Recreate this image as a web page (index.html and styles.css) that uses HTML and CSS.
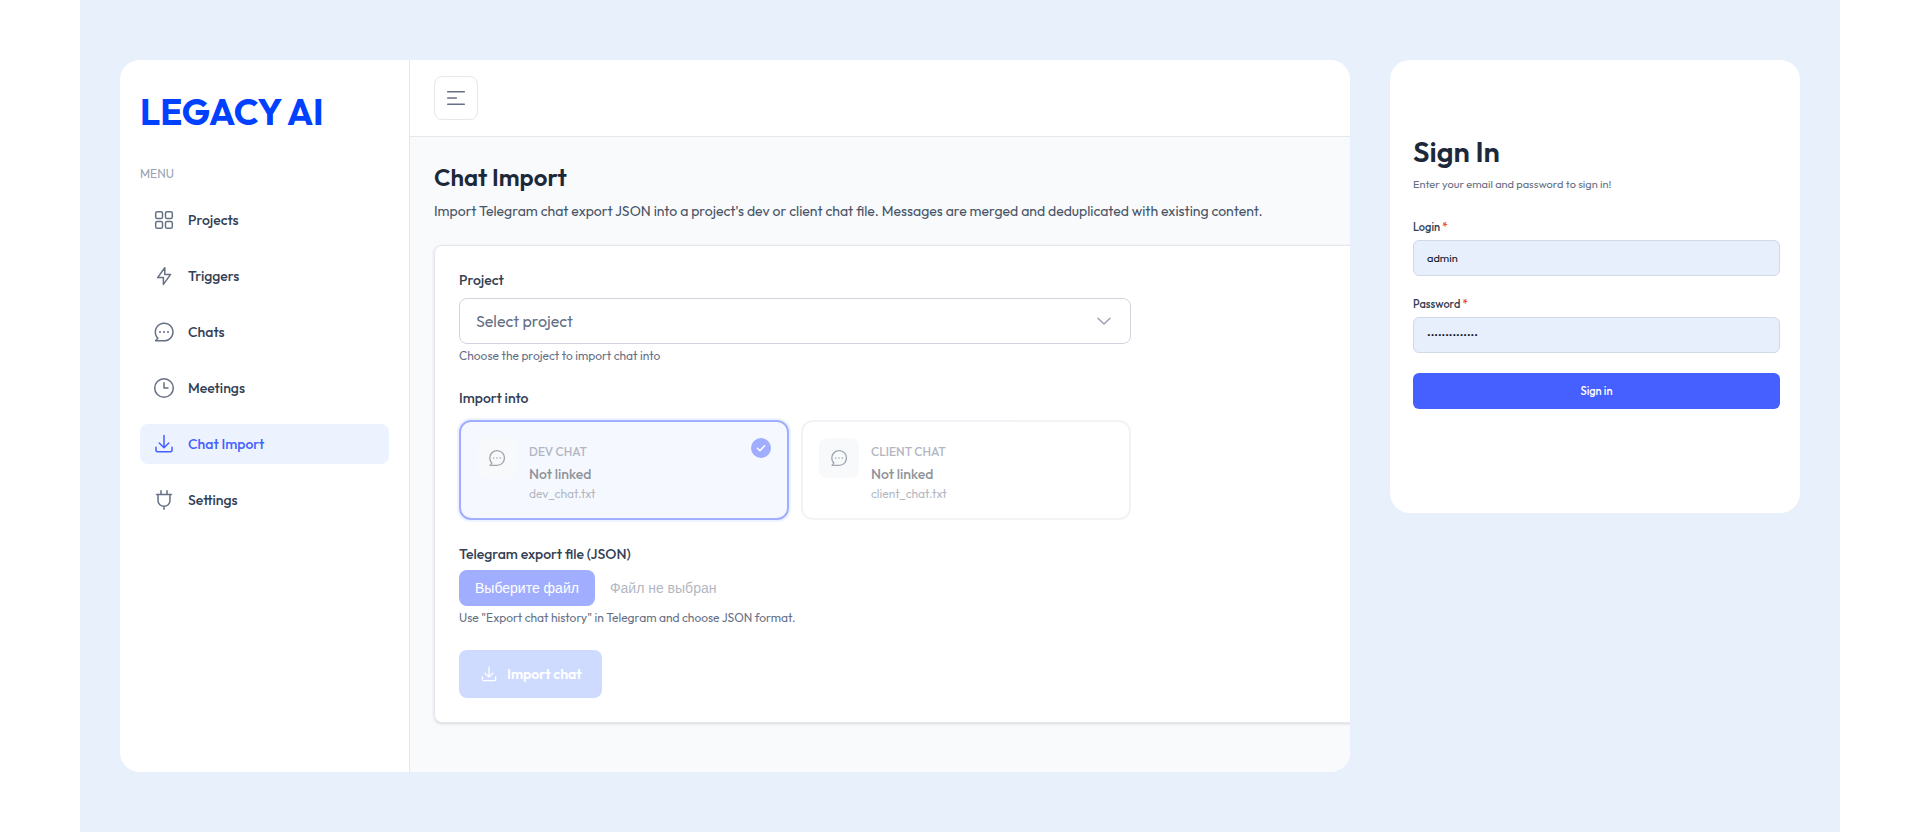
FILE: index.html
```html
<!DOCTYPE html>
<html lang="en">
<head>
    <meta charset="UTF-8">
    <meta name="viewport" content="width=device-width, initial-scale=1.0">
    <title>Legacy AI - Chat Import</title>
    <link rel="stylesheet" href="styles.css">
</head>
<body>
    <!-- Shared icons -->
    <svg class="sprite" aria-hidden="true">
        <symbol id="icon-chat" viewBox="0 0 24 24">
            <path d="M3.6 20.8L5.9 18.2A8.8 8.8 0 1 1 12 20.8Z"/>
            <path d="M8 12h.01M12 12h.01M16 12h.01" stroke-width="2"/>
        </symbol>
        <symbol id="icon-download" viewBox="0 0 24 24">
            <path d="M12 3.5V15.6M7.2 11L12 15.8L16.8 11M4 15.3V18.3A1.5 1.5 0 0 0 5.5 19.8H18.5A1.5 1.5 0 0 0 20 18.3V15.3"/>
        </symbol>
    </svg>

    <div class="stage">
        <div class="app">
            <aside class="sidebar">
                <div class="logo">LEGACY AI</div>
                <h2 class="menu-title">MENU</h2>
                <nav class="menu">
                    <a href="#" class="menu-item">
                        <svg class="icon" viewBox="0 0 24 24"><rect x="3.7" y="3.7" width="6.8" height="6.8" rx="1.6"/><rect x="13.5" y="3.7" width="6.8" height="6.8" rx="1.6"/><rect x="3.7" y="13.5" width="6.8" height="6.8" rx="1.6"/><rect x="13.5" y="13.5" width="6.8" height="6.8" rx="1.6"/></svg>
                        Projects
                    </a>
                    <a href="#" class="menu-item">
                        <svg class="icon" viewBox="0 0 24 24"><path d="M12.8 3.8L5.6 13.6H11.4V20.4L18.6 10.4H12.8Z"/></svg>
                        Triggers
                    </a>
                    <a href="#" class="menu-item">
                        <svg class="icon"><use href="#icon-chat"/></svg>
                        Chats
                    </a>
                    <a href="#" class="menu-item">
                        <svg class="icon" viewBox="0 0 24 24"><circle cx="12" cy="12" r="9.3"/><path d="M12 6.8V12H16"/></svg>
                        Meetings
                    </a>
                    <a href="#" class="menu-item active">
                        <svg class="icon"><use href="#icon-download"/></svg>
                        Chat Import
                    </a>
                    <a href="#" class="menu-item">
                        <svg class="icon" viewBox="0 0 24 24"><path d="M9 2.8V6.3M15 2.8V6.3M4.6 6.4H19.4M6 6.4V12.6C6 16 8.8 18.3 12 18.3S18 16 18 12.6V6.4M12 18.3V21.2"/></svg>
                        Settings
                    </a>
                </nav>
            </aside>

            <div class="main">
                <header class="topbar">
                    <button type="button" class="toggle" aria-label="Toggle sidebar">
                        <svg class="icon" viewBox="0 0 24 24"><path d="M3.7 5.7H20.3M3.7 12H12.4M3.7 18.3H20.3"/></svg>
                    </button>
                </header>

                <main class="content">
                    <h1>Chat Import</h1>
                    <p class="lead">Import Telegram chat export JSON into a project's dev or client chat file. Messages are merged and deduplicated with existing content.</p>

                    <form class="card">
                        <div class="field">
                            <label class="label" for="project">Project</label>
                            <div class="select-wrap">
                                <select id="project">
                                    <option>Select project</option>
                                </select>
                                <svg class="chevron" viewBox="0 0 20 20"><path d="M4 7.2L10 13L16 7.2"/></svg>
                            </div>
                            <p class="hint">Choose the project to import chat into</p>
                        </div>

                        <fieldset class="field">
                            <legend class="label">Import into</legend>
                            <div class="targets">
                                <label class="target selected">
                                    <input type="radio" name="target" checked disabled>
                                    <span class="tile"><svg class="icon"><use href="#icon-chat"/></svg></span>
                                    <span class="target-text">
                                        <span class="target-kind">DEV CHAT</span>
                                        <span class="target-name">Not linked</span>
                                        <span class="target-file">dev_chat.txt</span>
                                    </span>
                                    <span class="badge"><svg viewBox="0 0 20 20"><path d="M6.4 10.3L8.9 12.7L13.6 7.7"/></svg></span>
                                </label>
                                <label class="target">
                                    <input type="radio" name="target" disabled>
                                    <span class="tile"><svg class="icon"><use href="#icon-chat"/></svg></span>
                                    <span class="target-text">
                                        <span class="target-kind">CLIENT CHAT</span>
                                        <span class="target-name">Not linked</span>
                                        <span class="target-file">client_chat.txt</span>
                                    </span>
                                </label>
                            </div>
                        </fieldset>

                        <div class="field">
                            <label class="label file-label" for="export-file">Telegram export file (JSON)</label>
                            <div class="file">
                                <span class="file-button">Выберите файл</span>
                                <span>Файл не выбран</span>
                                <input type="file" id="export-file" accept=".json" disabled>
                            </div>
                            <p class="hint">Use "Export chat history" in Telegram and choose JSON format.</p>
                        </div>

                        <button type="submit" class="import-button" disabled>
                            <svg class="icon"><use href="#icon-download"/></svg>
                            Import chat
                        </button>
                    </form>
                </main>
            </div>
        </div>

        <form class="login">
            <h1>Sign In</h1>
            <p>Enter your email and password to sign in!</p>
            <label for="login">Login <span class="required">*</span></label>
            <input type="text" id="login" value="admin">
            <label for="password">Password <span class="required">*</span></label>
            <input type="password" id="password" value="adminpassword1">
            <button type="submit">Sign in</button>
        </form>
    </div>
</body>
</html>
```
FILE: styles.css
```css
* {
    margin: 0;
    padding: 0;
    box-sizing: border-box;
}

body {
    font-family: Outfit, Lato, sans-serif;
    font-size: 14px;
    line-height: 20px;
    background: #fff;
    color: #344054;
}

button,
input,
select {
    font: inherit;
}

.sprite {
    position: absolute;
    width: 0;
    height: 0;
}

.icon {
    width: 24px;
    height: 24px;
    flex: none;
    fill: none;
    stroke: currentColor;
    stroke-width: 1.5;
    stroke-linecap: round;
    stroke-linejoin: round;
}

.stage {
    display: grid;
    grid-template-columns: 3fr 1fr;
    align-items: start;
    gap: 40px;
    max-width: 1760px;
    min-height: 100vh;
    margin: 0 auto;
    padding: 60px 40px;
    background: #e8f1fb;
}

.app,
.login {
    border-radius: 20px;
    overflow: hidden;
    background: #fff;
}

.app {
    display: flex;
}

/* Sidebar */
.sidebar {
    width: 290px;
    flex: none;
    padding: 32px 20px;
    border-right: 1px solid #e4e7ec;
}

.logo {
    margin-bottom: 32px;
    font-size: 36px;
    line-height: 40px;
    font-weight: 700;
    color: #0040ff;
}

.menu-title {
    margin-bottom: 16px;
    font-size: 12px;
    line-height: 20px;
    font-weight: 400;
    color: #98a2b3;
}

.menu {
    display: flex;
    flex-direction: column;
    gap: 16px;
}

.menu-item {
    display: flex;
    align-items: center;
    gap: 12px;
    padding: 8px 12px;
    border-radius: 8px;
    font-weight: 500;
    color: #344054;
    text-decoration: none;
}

.menu-item .icon {
    color: #667085;
}

.menu-item.active {
    background: #ecf3ff;
}

.menu-item.active,
.menu-item.active .icon {
    color: #465fff;
}

/* Main area */
.main {
    flex: 1;
    min-width: 0;
    background: #f9fafc;
}

.topbar {
    padding: 16px 24px;
    border-bottom: 1px solid #e4e7ec;
    background: #fff;
}

.toggle {
    display: flex;
    align-items: center;
    justify-content: center;
    width: 44px;
    height: 44px;
    border: 1px solid #e4e7ec;
    border-radius: 8px;
    background: #fff;
    color: #667085;
}

.content {
    padding: 24px 0 49px 24px;
}

.content h1 {
    margin-bottom: 8px;
    font-size: 24px;
    line-height: 32px;
    font-weight: 600;
    color: #1d2939;
}

.lead {
    margin-bottom: 24px;
    color: #475467;
}

/* The card runs on past the clipped right edge of the window */
.card {
    margin-right: -24px;
    padding: 24px;
    border: 1px solid #e4e7ec;
    border-radius: 8px;
    background: #fff;
    box-shadow: 0 1px 3px rgba(16, 24, 40, 0.15);
}

.field {
    max-width: 672px;
    margin-bottom: 24px;
    border: none;
}

.label {
    display: block;
    margin-bottom: 8px;
    font-weight: 500;
}

legend.label {
    margin-bottom: 12px;
}

.file-label {
    margin-bottom: 6px;
}

.select-wrap,
.file,
.target {
    position: relative;
}

select {
    display: block;
    width: 100%;
    height: 46px;
    padding: 0 48px 0 16px;
    border: 1px solid #d0d5dd;
    border-radius: 8px;
    appearance: none;
    background: #fff;
    color: #667085;
    font-size: 16px;
}

.chevron {
    position: absolute;
    top: 13px;
    right: 17px;
    width: 20px;
    height: 20px;
    fill: none;
    stroke: #98a2b3;
    stroke-width: 1.5;
    stroke-linecap: round;
    stroke-linejoin: round;
    pointer-events: none;
}

.hint {
    margin-top: 4px;
    font-size: 12px;
    line-height: 16px;
    color: #667085;
}

/* Chat targets */
.targets {
    display: grid;
    grid-template-columns: 1fr 1fr;
    gap: 12px;
}

.target {
    display: flex;
    gap: 12px;
    padding: 16px;
    border: 2px solid #e4e7ec;
    border-radius: 12px;
    opacity: 0.5;
}

.target.selected {
    border-color: #465fff;
    background: #ecf3ff;
    box-shadow: 0 0 0 2px #dde9ff;
}

.target input {
    position: absolute;
    opacity: 0;
}

.tile {
    display: flex;
    align-items: center;
    justify-content: center;
    width: 40px;
    height: 40px;
    border-radius: 8px;
    background: #f2f4f7;
    color: #475467;
}

.tile .icon {
    width: 20px;
    height: 20px;
}

.target-text {
    display: flex;
    flex-direction: column;
    padding-top: 6px;
}

.target-kind,
.target-file {
    font-size: 12px;
    line-height: 16px;
    color: #667085;
}

.target-kind {
    font-weight: 500;
}

.target-name {
    margin: 4px 0 2px;
    font-weight: 500;
    color: #1d2939;
}

.badge {
    position: absolute;
    top: 16px;
    right: 16px;
    width: 20px;
    height: 20px;
    border-radius: 50%;
    background: #465fff;
}

.badge svg {
    display: block;
    fill: none;
    stroke: #fff;
    stroke-width: 1.5;
    stroke-linecap: round;
    stroke-linejoin: round;
}

/* File picker */
.file {
    display: flex;
    align-items: center;
    gap: 15px;
    font-family: "Liberation Sans", Arial, sans-serif;
    color: #667085;
    opacity: 0.5;
}

.file-button {
    padding: 8px 16px;
    border-radius: 8px;
    background: #465fff;
    color: #fff;
}

.file input {
    position: absolute;
    inset: 0;
    width: 100%;
    opacity: 0;
}

.import-button {
    display: flex;
    align-items: center;
    gap: 8px;
    height: 48px;
    padding: 0 20px;
    border: none;
    border-radius: 8px;
    background: #cedbff;
    color: #fff;
    font-weight: 600;
}

.import-button .icon {
    width: 20px;
    height: 20px;
}

/* Sign in */
.login {
    display: flex;
    flex-direction: column;
    padding: 76px 20px 104px 23px;
    font-size: 11px;
    line-height: 16px;
}

.login h1 {
    margin-bottom: 8px;
    font-size: 29px;
    line-height: 32px;
    font-weight: 600;
    color: #1d2939;
}

.login p {
    margin-bottom: 27px;
    color: #667085;
}

.login label {
    margin-bottom: 5px;
    font-weight: 500;
}

.required {
    color: #f04438;
}

.login input {
    height: 36px;
    margin-bottom: 20px;
    padding: 0 13px;
    border: 1px solid #d0d9e6;
    border-radius: 6px;
    background: #e8effc;
    color: #101828;
}

.login button {
    height: 36px;
    border: none;
    border-radius: 6px;
    background: #465fff;
    color: #fff;
    font-weight: 500;
}
```
